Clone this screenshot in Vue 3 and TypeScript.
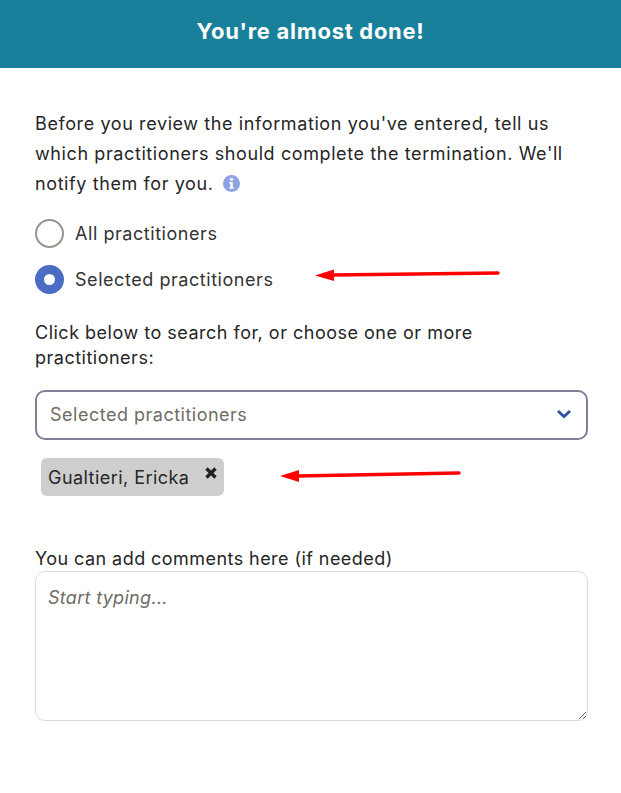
<script setup lang="ts">
const practitioners = [
  { label: 'All practitioners', selected: false },
  { label: 'Selected practitioners', selected: true },
]
</script>

<template>
  <div class="page">
    <header class="banner">You're almost done!</header>
    <main class="content">
      <p class="intro">
        Before you review the information you've entered, tell us which practitioners should complete the termination. We'll notify them for you.
        <svg class="info" viewBox="0 0 16 16" aria-hidden="true">
          <circle cx="8" cy="8" r="8" fill="#8ea3e6" />
          <circle cx="8" cy="4.1" r="1.6" fill="#fff" />
          <path d="M5.9 6.6h3.3v5h1v1.4H5.9v-1.4h1v-3.6h-1z" fill="#fff" />
        </svg>
      </p>
      <div class="radios">
        <label v-for="p in practitioners" :key="p.label" class="radio">
          <span class="dot" :class="{ on: p.selected }"></span>
          {{ p.label }}
        </label>
      </div>
      <p class="prompt">Click below to search for, or choose one or more practitioners:</p>
      <div class="select">
        <span>Selected practitioners</span>
        <svg class="chev" viewBox="0 0 16 10" aria-hidden="true">
          <path d="M2 2l6 5.5L14 2" fill="none" stroke="#2f4fa2" stroke-width="2.8" />
        </svg>
      </div>
      <div class="chip">
        <span>Gualtieri, Ericka</span>
        <svg class="close" viewBox="0 0 14 14" aria-hidden="true">
          <path d="M2.5 2.5l9 9M11.500 2.500l-9 9" stroke="#222" stroke-width="3.4" />
        </svg>
      </div>
      <label class="comment-label" for="comments">You can add comments here (if needed)</label>
      <textarea id="comments" class="comments" placeholder="Start typing..."></textarea>
    </main>
    <svg class="arrow one" viewBox="0 0 190 20" aria-hidden="true">
      <path d="M184 8 L18 10" stroke="#f00" stroke-width="3.4" stroke-linecap="round" />
      <path d="M1 10.500 L20 4.500 L20 16 Z" fill="#f00" />
    </svg>
    <svg class="arrow two" viewBox="0 0 190 20" aria-hidden="true">
      <path d="M180 7 L18 10" stroke="#f00" stroke-width="3.4" stroke-linecap="round" />
      <path d="M1 10 L20 4 L20 16 Z" fill="#f00" />
    </svg>
  </div>
</template>

<style>
html, body { background: #fff; }
</style>

<style scoped>
.page {
  position: relative;
  width: 621px;
  height: 793px;
  overflow: hidden;
  background: #fff;
  font-family: Inter, "Noto Sans", sans-serif;
  color: #262626;
  font-size: 18px;
  letter-spacing: 0.6px;
}
.banner {
  height: 68px;
  background: #18809b;
  color: #fff;
  font-weight: 700;
  font-size: 22px;
  letter-spacing: 0.7px;
  line-height: 63px;
  text-align: center;
}
.content {
  padding: 41px 33px 0 35px;
  display: flex;
  flex-direction: column;
}
.intro {
  margin: 0;
  line-height: 30px;
}
.info {
  width: 17px;
  height: 17px;
  margin-left: 4px;
  vertical-align: -2px;
}
.radios {
  margin-top: 20px;
  display: flex;
  flex-direction: column;
  gap: 17px;
  letter-spacing: 0.55px;
}
.radio {
  display: flex;
  align-items: center;
  gap: 11px;
  height: 29px;
  color: #333;
}
.dot {
  width: 29px;
  height: 29px;
  box-sizing: border-box;
  border: 2.500px solid #98938c;
  border-radius: 50%;
}
.dot.on {
  background: #fff;
  border: 9.500px solid #4a6cc3;
}
.prompt {
  margin: 26px 0 0;
  line-height: 25px;
  letter-spacing: 0.5px;
}
.select {
  margin-top: 20px;
  height: 50px;
  box-sizing: border-box;
  border: 2px solid #7d8097;
  border-radius: 10px;
  padding: 0 14px 2px 13px;
  display: flex;
  align-items: center;
  justify-content: space-between;
  color: #706b66;
  letter-spacing: 0.5px;
}
.chev { width: 16px; height: 10px; }
.chip {
  align-self: flex-start;
  margin: 18px 0 0 6px;
  height: 38px;
  box-sizing: border-box;
  padding: 0 6px 0 7px;
  background: #cecece;
  border-radius: 6px;
  display: flex;
  align-items: center;
  gap: 15px;
  letter-spacing: 0.45px;
}
.close { width: 14px; height: 14px; margin-top: -8px; }
.comment-label {
  margin-top: 51px;
  line-height: 24px;
  letter-spacing: 0.44px;
}
.comments {
  display: block;
  width: 100%;
  height: 150px;
  box-sizing: border-box;
  margin: 0;
  padding: 15px 12px 13px;
  border: 1px solid #ddd;
  border-radius: 10px;
  outline: none;
  font: inherit;
  letter-spacing: 0.3px;
  color: #333;
}
.comments::placeholder {
  color: #706b66;
  font-style: italic;
  opacity: 1;
}
.arrow {
  position: absolute;
  width: 190px;
  height: 20px;
}
.arrow.one { left: 314px; top: 265px; }
.arrow.two { left: 279px; top: 466px; }
</style>
